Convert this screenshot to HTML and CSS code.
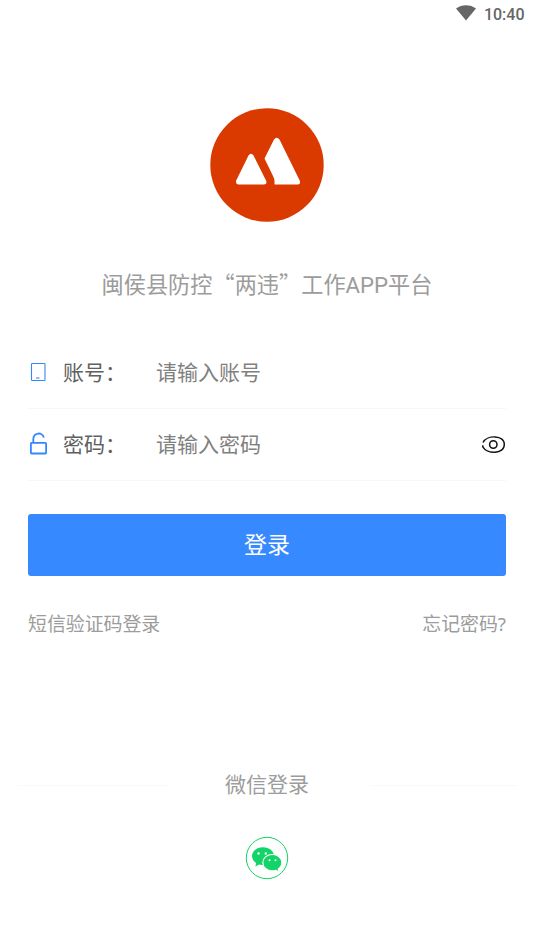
FILE: index.html
```
<!DOCTYPE html>
<html lang="zh-CN">
<head>
<meta charset="utf-8">
<title>登录</title>
<link rel="stylesheet" href="styles.css">
</head>
<body>
<header class="status">
  <svg class="wifi" viewBox="0 0 20 16"><path d="M0 3.5C5.5-1 14.500-1 20 3.500L10 15.500Z"/></svg>
  <span>10:40</span>
</header>
<main>
  <svg class="logo" viewBox="0 0 114 114">
    <circle cx="57" cy="57" r="56.700"/>
    <path d="M38.500 47.500Q41 43.800 43.500 47.500L56 72.500Q57.500 76.500 54 76.500H28.500Q25.500 76.500 26.200 72.500Z"/>
    <path d="M64 31.500Q66.500 27.800 69.500 31.500L89.700 72.500Q91 76.500 87.500 76.500H64.500V73Q64.500 71 63 68L54.500 50.500Z"/>
  </svg>
  <h1 class="title">闽侯县防控“两违”工作<span class="latin">APP</span>平台</h1>
  <form class="form">
    <label class="field">
      <svg class="icon" viewBox="0 0 22 24"><rect x="3.500" y="3.500" width="13.500" height="17" rx=".8"/><path d="M8 18H11.500"/></svg>
      <span class="name">账号：</span>
      <input class="input" type="text" placeholder="请输入账号">
    </label>
    <label class="field">
      <svg class="icon lock" viewBox="0 0 22 24"><rect x="2.900" y="10.800" width="15.200" height="10.700" rx=".7"/><path d="M5.300 10.500V7.500C5.300-.1 14.500-.2 15.800 5.600"/></svg>
      <span class="name">密码：</span>
      <input class="input" type="password" placeholder="请输入密码">
      <svg class="eye" viewBox="0 0 24 18"><path d="M1 6.500C5-1.300 22.300-1.300 22.300 8.500C22.300 18.300 5 18.300 .8 10.800V9.300"/><circle cx="11.300" cy="8.500" r="3.700"/></svg>
    </label>
    <button class="submit" type="button">登录</button>
  </form>
  <nav class="links"><span>短信验证码登录</span><span>忘记密码<span class="question">?</span></span></nav>
  <section class="other">
    <div class="divider"><span class="caption">微信登录</span></div>
    <svg class="wechat" viewBox="0 0 44 44">
      <circle class="ring" cx="22" cy="22" r="20.700"/>
      <path d="M18 11.300C11.800 11.300 7 15.100 7 20.100C7 23 8.700 25.500 11.200 27L10.300 30.500L14.200 28.400C15.400 28.800 16.700 29 18 29C24.200 29 29 25.100 29 20.100S24.200 11.300 18 11.300Z"/>
      <path class="front" d="M27.300 18.500C22 18.500 17.800 22 17.800 26.700S22 34.900 27.300 34.900C28.500 34.900 29.700 34.700 30.800 34.300L34.100 36L33.300 33C35.500 31.500 36.800 29.200 36.800 26.700C36.800 22 32.600 18.500 27.300 18.500Z"/>
      <g class="dots"><circle cx="13.500" cy="17.500" r="1.200"/><circle cx="20.800" cy="17.500" r="1.200"/><circle cx="24.500" cy="24.300" r="1"/><circle cx="30.500" cy="24.300" r="1"/></g>
    </svg>
  </section>
</main>
</body>
</html>
```
FILE: styles.css
```
* { box-sizing: border-box; }
body {
  margin: 0;
  min-height: 949px;
  background: #fff;
  color: #9c9c9c;
  font-family: "Noto Sans CJK SC", sans-serif;
  font-weight: 400;
}
.status {
  height: 28px;
  padding: 1px 9.5px 0 0;
  display: flex;
  justify-content: flex-end;
  align-items: center;
  gap: 8px;
  color: #666;
  font: 500 16px/27px Roboto, sans-serif;
}
.wifi { width: 20px; height: 16px; fill: #666; margin-bottom: 3px; }
main { display: flex; flex-direction: column; }
.logo { width: 114px; height: 114px; margin: 79.5px auto 0; fill: #fff; }
.logo circle { fill: #da3900; }
.title {
  margin: 46.5px 0 0;
  font-size: 22.2px;
  line-height: 30px;
  font-weight: 400;
  text-align: center;
  white-space: nowrap;
}
.latin { font-family: Roboto, sans-serif; }
.question { font-family: "Noto Sans", sans-serif; }
.form { margin: 37px 28px 0; }
.field {
  height: 72px;
  display: flex;
  align-items: center;
  border-bottom: 1px solid #f7f7f7;
  font-size: 21px;
}
.icon { width: 22px; height: 24px; margin-bottom: 1px; fill: none; stroke: #3388ff; stroke-width: 1.1; }
.lock { stroke-width: 1.8; }
.name { width: 93px; margin-left: 13px; padding-bottom: 4px; color: #606060; white-space: nowrap; }
.input {
  flex: 1;
  min-width: 0;
  padding: 0 0 4px;
  border: 0;
  outline: 0;
  background: none;
  font: inherit;
  color: #606060;
}
.input::placeholder { color: #808080; opacity: 1; }
.eye { width: 24px; height: 18px; fill: none; stroke: #111; stroke-width: 1.5; }
.submit {
  display: block;
  width: 100%;
  height: 62px;
  margin-top: 33px;
  padding: 0 0 4px;
  border: 0;
  border-radius: 3px;
  background: #3689ff;
  color: #fff;
  font: inherit;
  font-size: 23px;
}
.links {
  margin: 33px 28px 0;
  display: flex;
  justify-content: space-between;
  font-size: 18.9px;
  line-height: 28px;
}
.other { margin-top: 130px; display: flex; flex-direction: column; align-items: center; }
.divider {
  width: 500px;
  display: grid;
  grid-template-columns: 151px 1fr 147px;
  align-items: center;
  text-align: center;
  font-size: 21px;
  line-height: 30px;
}
.caption { padding: 0 4px 4px 0; }
.divider::before, .divider::after { content: ""; height: 1px; background: #f9f9f9; }
.wechat { width: 44px; height: 44px; margin-top: 33.5px; fill: #12d468; }
.ring { fill: none; stroke: #12d468; stroke-width: 1; }
.front { stroke: #fff; stroke-width: 1.2; }
.dots { fill: #fff; }
```
